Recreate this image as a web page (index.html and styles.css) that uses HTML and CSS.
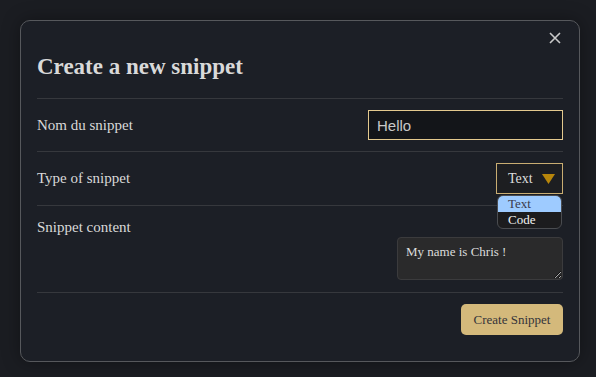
FILE: index.html
```html
<!DOCTYPE html>
<html lang="en">
<head>
<meta charset="utf-8">
<title>Create a new snippet</title>
<link rel="stylesheet" href="styles.css">
</head>
<body>
<div class="modal">
  <div class="modal-top">
    <button class="close" aria-label="Close">
      <svg width="12" height="12" viewBox="0 0 12 12"><path d="M1 1L11 11M11 1L1 11" stroke="#c9c9c9" stroke-width="1.6" fill="none"/></svg>
    </button>
  </div>
  <h2 class="title">Create a new snippet</h2>
  <div class="row row-center">
    <label class="label">Nom du snippet</label>
    <input class="text-input" type="text" value="Hello">
  </div>
  <div class="row row-center">
    <label class="label">Type of snippet</label>
    <div class="select-wrap">
      <div class="select">
        <span class="select-value">Text</span>
        <svg class="caret" width="13" height="10" viewBox="0 0 13 10"><path d="M0 0H13L6.5 10Z" fill="#b8860b"/></svg>
      </div>
      <ul class="options">
        <li class="option active">Text</li>
        <li class="option">Code</li>
      </ul>
    </div>
  </div>
  <div class="row row-top">
    <label class="label">Snippet content</label>
    <textarea class="area">My name is Chris !</textarea>
  </div>
  <div class="footer">
    <button class="submit">Create Snippet</button>
  </div>
</div>
</body>
</html>
```

FILE: styles.css
```css
html, body {
  margin: 0;
  padding: 0;
}
body {
  background: #1b1d22;
  font-family: "Liberation Serif", "Times New Roman", serif;
  color: #d8d8d8;
  width: 596px;
  height: 377px;
  overflow: hidden;
}
.modal {
  margin: 20px 0 0 20px;
  width: 560px;
  height: 342px;
  box-sizing: border-box;
  border: 1px solid #56585c;
  border-radius: 10px;
  background: #1c1f26;
  box-shadow: 0 0 18px rgba(0, 0, 0, 0.35);
  padding: 11px 16px 0 16px;
  display: flex;
  flex-direction: column;
}
.modal-top {
  display: flex;
  justify-content: flex-end;
  height: 12px;
  padding-right: 2px;
}
.close {
  background: none;
  border: 0;
  padding: 0;
  width: 12px;
  height: 12px;
  display: flex;
}
.title {
  margin: 9px 0 0 0;
  font-size: 23px;
  line-height: 28px;
  font-weight: bold;
  color: #d9d9d9;
  padding-bottom: 17px;
  border-bottom: 1px solid #36383d;
}
.row {
  display: flex;
  justify-content: space-between;
  border-bottom: 1px solid #36383d;
}
.row-center {
  align-items: center;
  padding: 11px 0 11px 0;
}
.row-top {
  align-items: flex-start;
  padding: 11px 0 12px 0;
}
.label {
  font-size: 15px;
  color: #d9d9d9;
}
.row-top .label {
  line-height: 20px;
}
.text-input {
  width: 195px;
  height: 30px;
  box-sizing: border-box;
  border: 1px solid #e3c98e;
  background: #131519;
  color: #c8c8c8;
  font-family: "Liberation Sans", Arial, sans-serif;
  font-size: 15px;
  padding: 0 8px;
  outline: none;
  margin: 0;
}
.select-wrap {
  position: relative;
}
.select {
  width: 67px;
  height: 31px;
  box-sizing: border-box;
  border: 1px solid #c9ad72;
  background: #1d1e21;
  display: flex;
  align-items: center;
  justify-content: space-between;
  padding: 0 7px 0 11px;
}
.select-value {
  font-size: 14px;
  color: #dcdcdc;
}
.options {
  position: absolute;
  top: 32px;
  left: 1px;
  width: 65px;
  margin: 0;
  padding: 0;
  list-style: none;
  box-sizing: border-box;
  border: 1px solid #4a4c50;
  border-radius: 6px;
  overflow: hidden;
  background: #1c1c1e;
  z-index: 2;
}
.option {
  font-size: 13px;
  line-height: 16px;
  height: 16px;
  padding-left: 10px;
  color: #f2f2f2;
}
.option.active {
  background: #9ecbff;
  color: #3a3a4a;
}
.area {
  width: 166px;
  height: 43px;
  box-sizing: border-box;
  margin: 20px 0 0 0;
  background: #2a2a2b;
  border: 1px solid #3b3b3d;
  border-radius: 4px;
  color: #dcdcdc;
  font-family: "Liberation Serif", "Times New Roman", serif;
  font-size: 13px;
  padding: 6px 8px;
  outline: none;
}
.footer {
  display: flex;
  justify-content: flex-end;
  padding-top: 11px;
}
.submit {
  width: 102px;
  height: 31px;
  border: 0;
  border-radius: 5px;
  background: #d4b97b;
  color: #34343a;
  font-family: "Liberation Serif", "Times New Roman", serif;
  font-size: 13px;
  padding: 0;
}
```
